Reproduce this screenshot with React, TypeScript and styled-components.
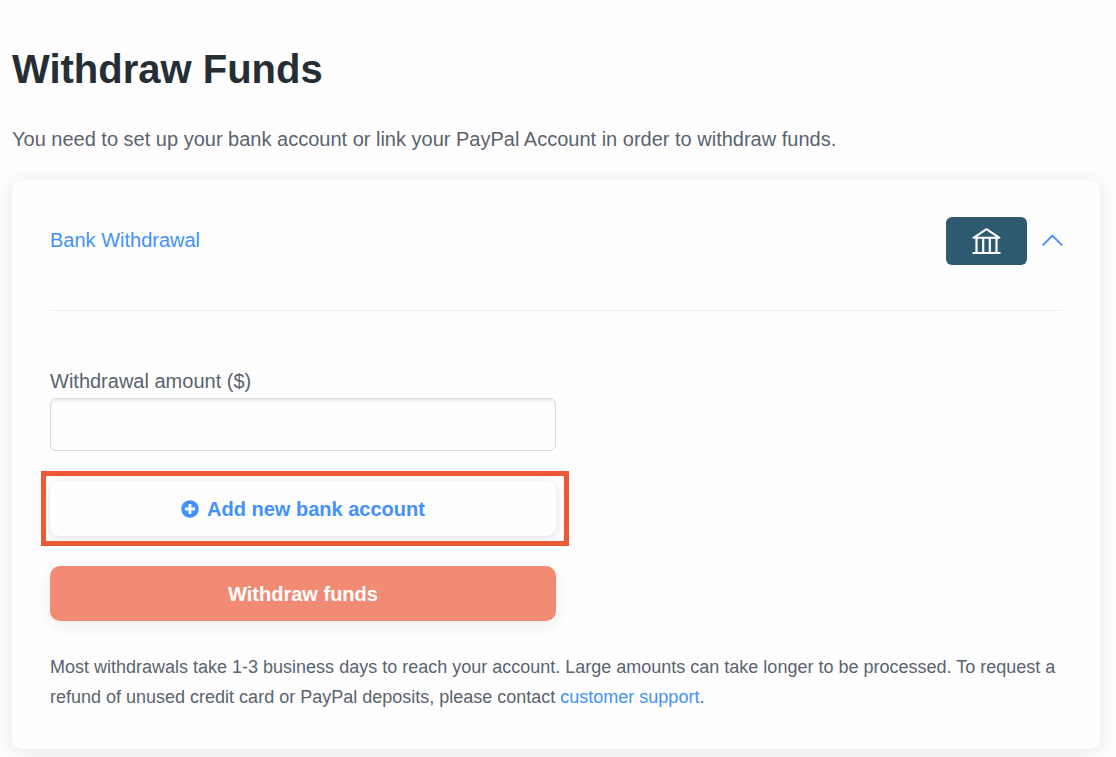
import React, { useState } from "react";
import styled, { createGlobalStyle } from "styled-components";
import { FaPlusCircle } from "react-icons/fa";

const GlobalStyle = createGlobalStyle`
  *, *::before, *::after { box-sizing: border-box; }
  body {
    margin: 0;
    background: #fefefe;
    color: #5a636e;
    font-family: "Liberation Sans", Arial, Helvetica, sans-serif;
    font-size: 20px;
    line-height: 30px;
  }
`;

const Page = styled.main`
  padding: 44px 16px 8px 12px;
`;

const Title = styled.h1`
  margin: 0;
  color: #262e35;
  font-size: 40px;
  line-height: 50px;
  font-weight: 700;
`;

const Intro = styled.p`
  margin: 30px 0 26px;
`;

const Card = styled.section`
  padding: 37px 38px;
  border-radius: 10px;
  background: #fefefe;
  box-shadow: 0 2px 20px rgba(0, 0, 0, 0.1);
`;

const CardHeader = styled.h2`
  margin: 0;
  padding-bottom: 45px;
  border-bottom: 1px solid #eeeeee;
  font-size: 20px;
  font-weight: 400;
`;

const Toggle = styled.button`
  display: flex;
  align-items: center;
  gap: 15px;
  width: 100%;
  padding: 0;
  border: 0;
  background: none;
  color: #4191ff;
  font: inherit;
  text-align: left;
  cursor: pointer;
`;

const ToggleLabel = styled.span`
  flex: 1;
  padding-bottom: 2px;
`;

const MethodBadge = styled.span`
  display: flex;
  align-items: center;
  justify-content: center;
  width: 81px;
  height: 48px;
  border-radius: 6px;
  background: #2d5a70;
`;

const Chevron = styled.svg<{ $open: boolean }>`
  overflow: visible;
  transform: ${(p) => (p.$open ? "none" : "rotate(180deg)")};
`;

const Form = styled.form`
  display: flex;
  flex-direction: column;
  width: 50%;
  min-width: 300px;
  padding-top: 55px;
`;

const AmountInput = styled.input`
  width: 100%;
  height: 53px;
  margin: 2px 0 30px;
  padding: 0 15px;
  border: 1px solid #dcdbd3;
  border-radius: 6px;
  background: #fefefe;
  box-shadow: inset 0 2px 3px rgba(0, 0, 0, 0.07);
  color: inherit;
  font: inherit;
`;

const Highlight = styled.div`
  position: relative;
  margin-bottom: 30px;

  &::after {
    content: "";
    position: absolute;
    inset: -10px -13px -10px -9px;
    border: 5px solid #ec5a35;
    pointer-events: none;
  }
`;

const ActionButton = styled.button<{ $primary?: boolean }>`
  display: flex;
  align-items: center;
  justify-content: center;
  gap: 8px;
  width: 100%;
  height: 55px;
  padding: 0;
  border: 0;
  border-radius: 10px;
  background: ${(p) => (p.$primary ? "#f18b74" : "#fefefe")};
  box-shadow: ${(p) =>
    p.$primary ? "0 4px 15px rgba(0, 0, 0, 0.08)" : "0 2px 10px rgba(0, 0, 0, 0.12)"};
  color: ${(p) => (p.$primary ? "#ffffff" : "#4191ff")};
  font: inherit;
  font-weight: 700;
  cursor: pointer;
`;

const Note = styled.p`
  margin: 31px 0 0;
  font-size: 18px;
`;

const Link = styled.a`
  color: #4191ff;
  text-decoration: none;
`;

function BankIcon() {
  return (
    <svg width="29" height="28" viewBox="0 0 29 28" fill="none" stroke="#fff" strokeWidth="2" aria-hidden="true">
      <path d="M1.5 10.8 14.5 2.2 27.5 10.8Z" strokeLinejoin="round" />
      <path d="M0.5 26h28" />
      <path d="M4.5 11v15M11.2 11v15M17.8 11v15M24.5 11v15" strokeWidth="2.2" />
    </svg>
  );
}

export default function App() {
  const [open, setOpen] = useState(true);
  const [amount, setAmount] = useState("");

  return (
    <>
      <GlobalStyle />
      <Page>
        <Title>Withdraw Funds</Title>
        <Intro>You need to set up your bank account or link your PayPal Account in order to withdraw funds.</Intro>
        <Card>
          <CardHeader>
            <Toggle type="button" aria-expanded={open} onClick={() => setOpen(!open)}>
              <ToggleLabel>Bank Withdrawal</ToggleLabel>
              <MethodBadge>
                <BankIcon />
              </MethodBadge>
              <Chevron $open={open} width="20" height="12" viewBox="0 0 20 12" fill="none" stroke="currentColor" strokeWidth="1.9" aria-hidden="true">
                <path d="M0.7 10.4 10.4 0.7l9.7 9.7" />
              </Chevron>
            </Toggle>
          </CardHeader>
          {open && (
            <>
              <Form onSubmit={(e) => e.preventDefault()}>
                <label htmlFor="amount">Withdrawal amount ($)</label>
                <AmountInput
                  id="amount"
                  inputMode="decimal"
                  value={amount}
                  onChange={(e) => setAmount(e.target.value)}
                />
                <Highlight>
                  <ActionButton type="button">
                    <FaPlusCircle size={18} aria-hidden="true" />
                    Add new bank account
                  </ActionButton>
                </Highlight>
                <ActionButton $primary type="submit">
                  Withdraw funds
                </ActionButton>
              </Form>
              <Note>
                Most withdrawals take 1-3 business days to reach your account. Large amounts can take longer to be
                processed. To request a refund of unused credit card or PayPal deposits, please contact{" "}
                <Link href="#support">customer support</Link>.
              </Note>
            </>
          )}
        </Card>
      </Page>
    </>
  );
}
